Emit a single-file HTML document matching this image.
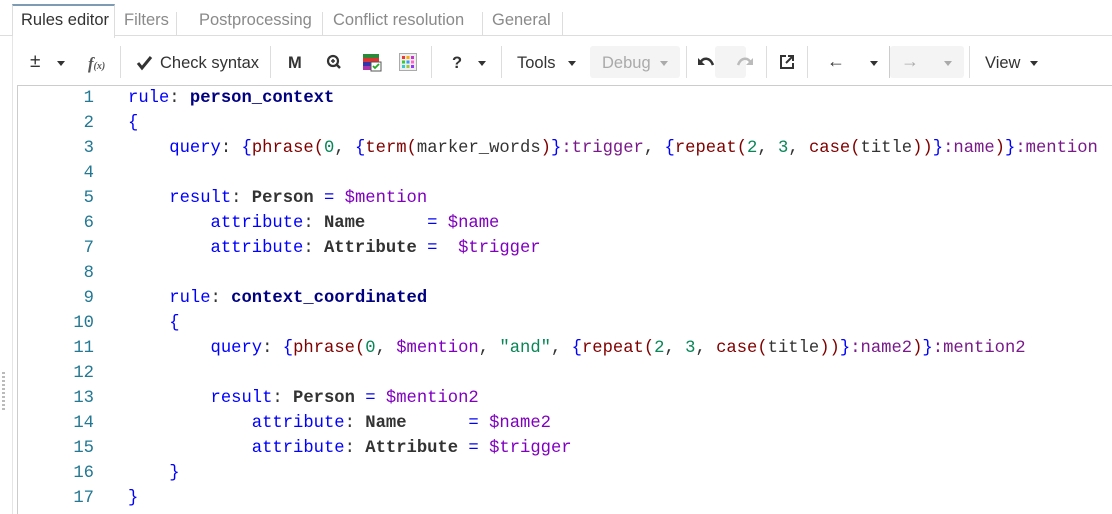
<!DOCTYPE html>
<html><head><meta charset="utf-8"><style>
body{margin:0;width:1112px;height:514px;background:#fff;position:relative;overflow:hidden;font-family:"Liberation Sans",sans-serif;}
.a{position:absolute;white-space:nowrap}
.tab{position:absolute;top:11px;font-size:16.5px;color:#8a8a8a}
.sep{position:absolute;width:1px;background:#ddd;top:46px;height:32px}
.tb{position:absolute;top:54px;font-size:16.5px;color:#333}
.car{position:absolute;top:61px;width:0;height:0;border-left:4px solid transparent;border-right:4px solid transparent;border-top:5px solid #333}
.code{position:absolute;left:128px;top:86px;font-family:"Liberation Mono",monospace;font-size:17.2px;line-height:25px;color:#333;white-space:pre}
.ln{position:absolute;left:40px;width:54px;top:86px;font-family:"Liberation Mono",monospace;font-size:17.2px;line-height:25px;color:#237893;text-align:right;white-space:pre}
.k{color:#0000ff}.n{color:#000080;font-weight:bold}.b{color:#0000ff}.f{color:#800000}.d{color:#098658}.v{color:#8000c0}.p{color:#7a1a8a}.o{color:#333;font-weight:bold}
</style></head><body>
<div class="a" style="left:0;top:35px;width:1112px;height:1px;background:#ddd"></div>
<div class="a" style="left:12px;top:4px;width:101px;height:32px;background:#fff;border:1px solid #ddd;border-top:2px solid #7e9bb3;border-bottom:none"></div>
<div class="tab" style="left:21px;color:#333">Rules editor</div>
<div class="tab" style="left:124px">Filters</div>
<div class="a" style="left:176px;top:12px;width:1px;height:23px;background:#ddd"></div>
<div class="tab" style="left:199px">Postprocessing</div>
<div class="a" style="left:322px;top:12px;width:1px;height:23px;background:#ddd"></div>
<div class="tab" style="left:333px">Conflict resolution</div>
<div class="a" style="left:482px;top:12px;width:1px;height:23px;background:#ddd"></div>
<div class="tab" style="left:492px">General</div>
<div class="a" style="left:562px;top:12px;width:1px;height:23px;background:#ddd"></div>
<div class="tb" style="left:30px;top:51px;font-size:19px">±</div><div class="car" style="left:57px"></div>
<div class="sep" style="left:120px"></div>
<div class="tb" style="left:88px;font-style:italic;font-family:'Liberation Serif',serif;font-weight:bold;color:#555">f<span style="font-size:10px">(x)</span></div>
<svg class="a" style="left:136px;top:55px" width="18" height="16"><path d="M2 8l4 5 9-11" stroke="#333" stroke-width="3" fill="none"/></svg>
<div class="tb" style="left:160px">Check syntax</div>
<div class="sep" style="left:270px"></div>
<div class="tb" style="left:288px;font-weight:bold">M</div>
<svg class="a" style="left:326px;top:54px" width="16" height="16"><circle cx="7" cy="7" r="5" fill="none" stroke="#333" stroke-width="2.2"/><line x1="10.5" y1="10.5" x2="14" y2="14" stroke="#333" stroke-width="2.5"/><line x1="5" y1="7" x2="9" y2="7" stroke="#333" stroke-width="1.5"/><line x1="7" y1="5" x2="7" y2="9" stroke="#333" stroke-width="1.5"/></svg>
<svg class="a" style="left:362px;top:53px" width="20" height="19"><rect x="1" y="1" width="16" height="4" fill="#2a8a3a"/><rect x="1" y="5" width="16" height="4" fill="#d33"/><rect x="1" y="9" width="16" height="4" fill="#33a"/><rect x="1" y="13" width="10" height="4" fill="#a3a"/><rect x="9" y="9" width="10" height="9" fill="#fff" stroke="#555"/><path d="M11 13l2 2 4-4" stroke="#2a2" stroke-width="1.8" fill="none"/></svg>
<svg class="a" style="left:399px;top:53px" width="18" height="18"><rect x="0.5" y="0.5" width="17" height="17" fill="#eee" stroke="#aaa"/><g><rect x="3" y="3" width="3" height="3" fill="#e33"/><rect x="7.5" y="3" width="3" height="3" fill="#fa0"/><rect x="12" y="3" width="3" height="3" fill="#c3c"/><rect x="3" y="7.5" width="3" height="3" fill="#3c3"/><rect x="7.5" y="7.5" width="3" height="3" fill="#39f"/><rect x="12" y="7.5" width="3" height="3" fill="#f6c"/><rect x="3" y="12" width="3" height="3" fill="#3cc"/><rect x="7.5" y="12" width="3" height="3" fill="#9c3"/><rect x="12" y="12" width="3" height="3" fill="#93f"/></g></svg>
<div class="sep" style="left:431px"></div>
<div class="tb" style="left:452px;font-weight:bold">?</div><div class="car" style="left:478px"></div>
<div class="sep" style="left:501px"></div>
<div class="tb" style="left:517px">Tools</div><div class="car" style="left:568px"></div>
<div class="a" style="left:590px;top:46px;width:90px;height:32px;background:#f4f4f4;border-radius:3px"></div>
<div class="tb" style="left:602px;color:#aaa">Debug</div><div class="car" style="left:660px;border-top-color:#aaa"></div>
<div class="sep" style="left:686px"></div>
<svg class="a" style="left:697px;top:54px" width="20" height="16"><path d="M3 9 C6 3 13 3 16 11" stroke="#333" stroke-width="2.5" fill="none"/><path d="M1 4 L1 11 L8 11Z" fill="#333"/></svg>
<div class="a" style="left:715px;top:46px;width:31px;height:32px;background:#f4f4f4;border-radius:3px"></div>
<svg class="a" style="left:734px;top:54px" width="20" height="16"><g transform="translate(20,0) scale(-1,1)"><path d="M3 9 C6 3 13 3 16 11" stroke="#bbb" stroke-width="2.5" fill="none"/><path d="M1 4 L1 11 L8 11Z" fill="#bbb"/></g></svg>
<div class="sep" style="left:766px"></div>
<svg class="a" style="left:779px;top:54px" width="16" height="16"><path d="M7 2H2v12h12V9" stroke="#333" stroke-width="2" fill="none"/><path d="M7 9L13 3M9 2h5v5" stroke="#333" stroke-width="2" fill="none"/></svg>
<div class="sep" style="left:807px"></div>
<div class="tb" style="left:827px;font-size:18px;top:51px">←</div><div class="car" style="left:870px"></div>
<div class="a" style="left:890px;top:46px;width:74px;height:32px;background:#f4f4f4;border-radius:3px"></div>
<div class="sep" style="left:889px;background:#ccc"></div>
<div class="tb" style="left:901px;font-size:18px;top:51px;color:#aaa">→</div><div class="car" style="left:944px;border-top-color:#aaa"></div>
<div class="sep" style="left:969px"></div>
<div class="tb" style="left:985px">View</div><div class="car" style="left:1030px"></div>
<div class="a" style="left:12px;top:36px;width:1px;height:478px;background:#e5e5e5"></div>
<div class="a" style="left:17px;top:85px;width:1095px;height:1px;background:#ccc"></div>
<div class="a" style="left:17px;top:85px;width:1px;height:429px;background:#ccc"></div>
<div class="a" style="left:2px;top:372px;width:3px;height:40px;background:repeating-linear-gradient(#bbb 0 2px,transparent 2px 4px)"></div>
<div class="ln">1
2
3
4
5
6
7
8
9
10
11
12
13
14
15
16
17</div>
<div class="code"><span class="k">rule</span>: <span class="n">person_context</span>
<span class="b">{</span>
    <span class="k">query</span>: <span class="b">{</span><span class="f">phrase(</span><span class="d">0</span>, <span class="b">{</span><span class="f">term(</span>marker_words<span class="f">)</span><span class="b">}</span><span class="p">:trigger</span>, <span class="b">{</span><span class="f">repeat(</span><span class="d">2</span>, <span class="d">3</span>, <span class="f">case(</span>title<span class="f">))</span><span class="b">}</span><span class="p">:name</span><span class="f">)</span><span class="b">}</span><span class="p">:mention</span>

    <span class="k">result</span>: <span class="o">Person</span> <span class="k">=</span> <span class="v">$mention</span>
        <span class="k">attribute</span>: <span class="o">Name</span>      <span class="k">=</span> <span class="v">$name</span>
        <span class="k">attribute</span>: <span class="o">Attribute</span> <span class="k">=</span>  <span class="v">$trigger</span>

    <span class="k">rule</span>: <span class="n">context_coordinated</span>
    <span class="b">{</span>
        <span class="k">query</span>: <span class="b">{</span><span class="f">phrase(</span><span class="d">0</span>, <span class="v">$mention</span>, <span class="d">"and"</span>, <span class="b">{</span><span class="f">repeat(</span><span class="d">2</span>, <span class="d">3</span>, <span class="f">case(</span>title<span class="f">))</span><span class="b">}</span><span class="p">:name2</span><span class="f">)</span><span class="b">}</span><span class="p">:mention2</span>

        <span class="k">result</span>: <span class="o">Person</span> <span class="k">=</span> <span class="v">$mention2</span>
            <span class="k">attribute</span>: <span class="o">Name</span>      <span class="k">=</span> <span class="v">$name2</span>
            <span class="k">attribute</span>: <span class="o">Attribute</span> <span class="k">=</span> <span class="v">$trigger</span>
    <span class="b">}</span>
<span class="b">}</span></div>
</body></html>
